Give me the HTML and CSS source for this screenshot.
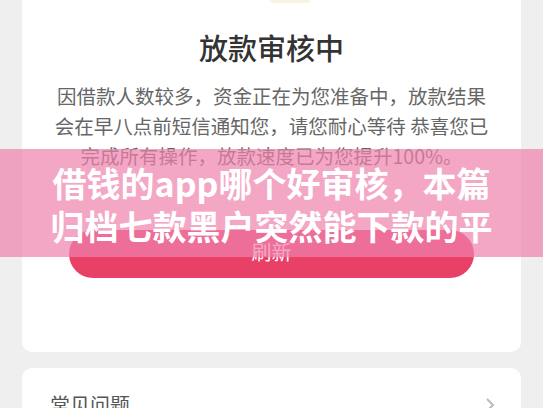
FILE: index.html
```html
<!DOCTYPE html>
<html lang="zh-CN">
<head>
    <meta charset="UTF-8">
    <meta name="viewport" content="width=device-width, initial-scale=1.0">
    <title>放款审核中</title>
    <link rel="stylesheet" href="styles.css">
</head>
<body>
    <div class="page">
        <div class="card status-card">
            <div class="status-icon"></div>
            <h1 class="status-title">放款审核中</h1>
            <p class="status-desc">
                <span>因借款人数较多，资金正在为您准备中，放款结果</span>
                <span>会在早八点前短信通知您，请您耐心等待 恭喜您已</span>
                <span>完成所有操作，放款速度已为您提升100%。</span>
            </p>
            <button class="refresh-btn">刷新</button>
        </div>

        <div class="card faq-card">
            <span class="faq-label">常见问题</span>
            <svg class="faq-arrow" width="10" height="16" viewBox="0 0 10 16">
                <path d="M2 2 L8 8 L2 14" fill="none" stroke="#bbb" stroke-width="2"/>
            </svg>
        </div>
    </div>

    <div class="banner">
        <span>借钱的app哪个好审核，本篇</span>
        <span>归档七款黑户突然能下款的平</span>
    </div>
</body>
</html>
```

FILE: styles.css
```css
body {
    margin: 0;
    width: 543px;
    height: 408px;
    overflow: hidden;
    background: #efefef;
    font-family: "Noto Sans CJK SC", "Noto Sans", sans-serif;
    position: relative;
}
.page {
    padding: 0 22px;
}
.card {
    background: white;
    border-radius: 10px;
}
.status-card {
    border-radius: 0 0 10px 10px;
    padding: 0 28px 74px;
    display: flex;
    flex-direction: column;
    align-items: center;
}
.status-icon {
    width: 40px;
    height: 3px;
    margin-left: 36px;
    background: #f8f4e2;
    border-radius: 0 0 20px 20px;
}
.status-title {
    margin: 24px 0 0;
    font-size: 29px;
    line-height: 40px;
    font-weight: 500;
    color: #333;
}
.status-desc {
    margin: 14px 0 0;
    font-size: 19.5px;
    line-height: 30px;
    color: #666;
    text-align: center;
}
.status-desc span {
    display: block;
    white-space: nowrap;
}
.refresh-btn {
    margin-top: 59px;
    width: 405px;
    height: 48px;
    border: none;
    border-radius: 24px;
    background: #e94068;
    color: white;
    font-family: inherit;
    font-size: 20px;
    padding: 0 0 6px;
}
.faq-card {
    margin-top: 16px;
    padding: 22px 26px 30px 28px;
    display: flex;
    align-items: center;
    justify-content: space-between;
}
.faq-label {
    font-size: 20px;
    line-height: 30px;
    color: #555;
}
.banner {
    position: absolute;
    top: 149px;
    left: 0;
    width: 543px;
    height: 108px;
    box-sizing: border-box;
    padding-top: 12px;
    background: rgba(238, 130, 172, 0.7);
    color: white;
    font-size: 34px;
    line-height: 43px;
    font-weight: 700;
    text-align: center;
}
.banner span {
    display: block;
    white-space: nowrap;
}
```
